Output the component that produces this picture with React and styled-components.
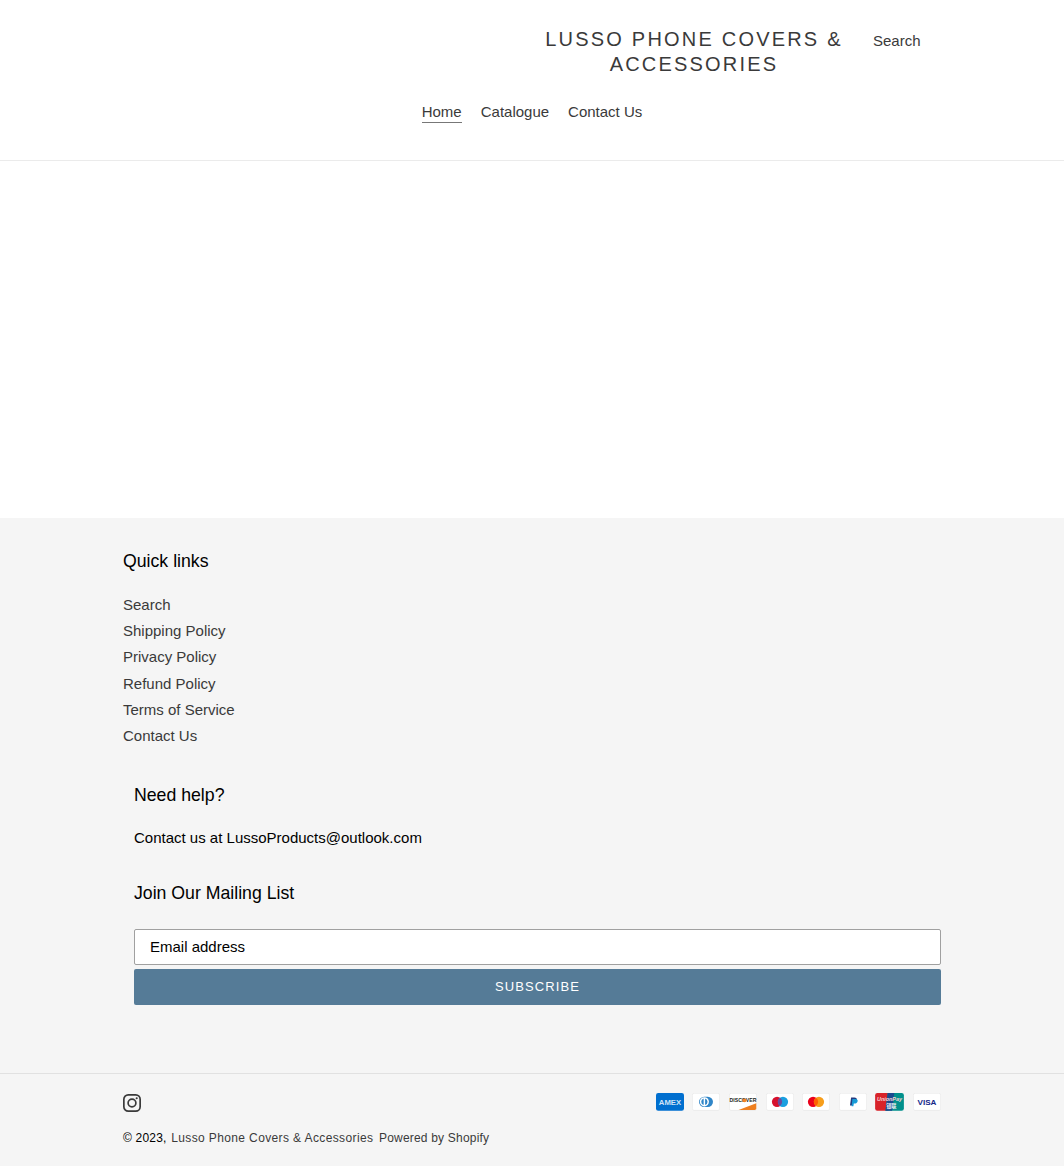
import styled, { createGlobalStyle } from "styled-components";

const GlobalStyle = createGlobalStyle`
  html, body {
    background: #fff;
    color: #3a3a3a;
    font-family: "Liberation Sans", Arial, sans-serif;
    font-size: 15px;
    margin: 0;
    padding: 0;
  }
  * { box-sizing: border-box; }
`;

const quickLinks = [
  "Search",
  "Shipping Policy",
  "Privacy Policy",
  "Refund Policy",
  "Terms of Service",
  "Contact Us",
];

function Card({ children }) {
  return (
    <svg width="28" height="17.7" viewBox="0 0 38 24" role="img">
      <rect x="0.5" y="0.5" width="37" height="23" rx="2.5" fill="#fff" stroke="#000" strokeOpacity="0.07" />
      {children}
    </svg>
  );
}

function PaymentIcons() {
  return (
    <PaymentList>
      <svg width="28" height="17.7" viewBox="0 0 38 24" role="img">
        <rect width="38" height="24" rx="3" fill="#006fcf" />
        <text x="19" y="15.8" textAnchor="middle" fontSize="10.5" fontWeight="700" fill="#cfe4f7" fontFamily="Liberation Sans">AMEX</text>
      </svg>
      <Card>
        <path d="M16.5 5h5a7 7 0 0 1 0 14h-5a7 7 0 0 1 0-14z" fill="#3086c8" />
        <circle cx="16.8" cy="12" r="6.2" fill="#fff" />
        <path d="M15.8 7.6a4.6 4.6 0 0 0 0 8.8zM17.8 7.6a4.6 4.6 0 0 1 0 8.8z" fill="#3086c8" />
      </Card>
      <Card>
        <path d="M13 23l24-9v7a2 2 0 0 1-2 2z" fill="#ee7f1f" />
        <text x="19" y="12.4" textAnchor="middle" fontSize="7" fontWeight="700" fill="#231f20" fontFamily="Liberation Sans">DISCOVER</text>
        <circle cx="21" cy="10" r="2.5" fill="#f58220" />
      </Card>
      <Card>
        <circle cx="15" cy="12" r="7" fill="#d6112e" />
        <circle cx="23" cy="12" r="7" fill="#1a9fe0" />
        <path d="M19 6.3a7 7 0 0 1 0 11.4 7 7 0 0 1 0-11.4z" fill="#6c4a9e" />
      </Card>
      <Card>
        <circle cx="15" cy="12" r="7" fill="#eb001b" />
        <circle cx="23" cy="12" r="7" fill="#f79e1b" />
        <path d="M19 6.3a7 7 0 0 1 0 11.4 7 7 0 0 1 0-11.4z" fill="#ff5f00" />
      </Card>
      <Card>
        <path d="M16.4 6h4.4c2.6 0 3.9 1.4 3.4 3.5-.5 2.4-2.3 3.6-4.6 3.6h-1.3l-.7 4h-2.7z" fill="#253b80" />
        <path d="M18.2 8h4.2c2.3 0 3.3 1.2 2.9 3.2-.5 2.2-2 3.2-4.1 3.2h-1.1l-.6 3.6h-2.4z" fill="#179bd7" />
      </Card>
      <svg width="29" height="17.7" viewBox="0 0 39 24" role="img">
        <path d="M3 0h18l-3 24H3a3 3 0 0 1-3-3V3a3 3 0 0 1 3-3z" fill="#d8232a" />
        <path d="M36 0a3 3 0 0 1 3 3v18a3 3 0 0 1-3 3H14l3-24z" fill="#00908c" />
        <path d="M17 0h9l-3 24h-9z" fill="#1a4a8f" />
        <text x="19.5" y="11" textAnchor="middle" fontSize="7.4" fontWeight="700" fontStyle="italic" fill="#f6d5d7" fontFamily="Liberation Sans">UnionPay</text>
        <text x="22" y="20" textAnchor="middle" fontSize="7" fontWeight="700" fill="#e8eef3" fontFamily="Noto Sans CJK SC">银联</text>
      </svg>
      <Card>
        <text x="19" y="16" textAnchor="middle" fontSize="11" fontWeight="700" fill="#142688" fontFamily="Liberation Sans">VISA</text>
      </Card>
    </PaymentList>
  );
}

export default function App() {
  return (
    <>
      <GlobalStyle />
      <Header>
        <TitleRow>
          <div />
          <SiteTitle href="#">Lusso Phone Covers &amp; Accessories</SiteTitle>
          <SearchLink href="#">Search</SearchLink>
        </TitleRow>
        <Nav>
          <NavLink href="#" $active>Home</NavLink>
          <NavLink href="#">Catalogue</NavLink>
          <NavLink href="#">Contact Us</NavLink>
        </Nav>
      </Header>
      <Main />
      <Footer>
        <FooterTop>
          <LinksBlock>
            <BlockTitle>Quick links</BlockTitle>
            <LinkList>
              {quickLinks.map((label) => (
                <li key={label}>
                  <FooterLink href="#">{label}</FooterLink>
                </li>
              ))}
            </LinkList>
          </LinksBlock>
          <Inset>
            <BlockTitle>Need help?</BlockTitle>
            <HelpText>Contact us at LussoProducts@outlook.com</HelpText>
            <BlockTitle>Join Our Mailing List</BlockTitle>
            <EmailInput placeholder="Email address" />
            <SubscribeButton>Subscribe</SubscribeButton>
          </Inset>
        </FooterTop>
        <FooterBottom>
          <BottomInner>
            <BottomLeft>
              <InstagramLink href="#" aria-label="Instagram">
                <svg width="18" height="18" viewBox="0 0 18 18" fill="none" stroke="#3a3a3a" strokeWidth="1.7">
                  <rect x="0.85" y="0.85" width="16.3" height="16.3" rx="4.4" />
                  <circle cx="9" cy="9" r="3.9" />
                  <circle cx="13.7" cy="4.3" r="1.05" fill="#3a3a3a" stroke="none" />
                </svg>
              </InstagramLink>
              <Copyright>
                © 2023, <BrandLink href="#">Lusso Phone Covers &amp; Accessories</BrandLink>{" "}
                <SmallLink href="#">Powered by Shopify</SmallLink>
              </Copyright>
            </BottomLeft>
            <PaymentIcons />
          </BottomInner>
        </FooterBottom>
      </Footer>
    </>
  );
}

const Header = styled.header`
  border-bottom: 1px solid #ebebeb;
  height: 161px;
  padding: 27px 123px 0;
`;

const TitleRow = styled.div`
  align-items: start;
  display: grid;
  grid-template-columns: 1fr 328px 83px;
`;

const SiteTitle = styled.a`
  color: #3a3a3a;
  font-size: 20px;
  letter-spacing: 2.2px;
  line-height: 25px;
  text-align: center;
  text-decoration: none;
  text-transform: uppercase;
`;

const SearchLink = styled.a`
  color: #3a3a3a;
  font-size: 15px;
  line-height: 28px;
  padding-left: 15px;
  text-decoration: none;
`;

const Nav = styled.nav`
  display: flex;
  gap: 19px;
  justify-content: center;
  margin-top: 25px;
`;

const NavLink = styled.a`
  border-bottom: 1px solid ${(props) => (props.$active ? "#777" : "transparent")};
  color: #3a3a3a;
  font-size: 15px;
  line-height: 20px;
  text-decoration: none;
`;

const Main = styled.main`
  height: 357px;
`;

const Footer = styled.footer`
  background: #f5f5f5;
  height: 648px;
`;

const FooterTop = styled.div`
  padding: 32px 123px 0;
`;

const LinksBlock = styled.div`
  margin-bottom: 35px;
`;

const BlockTitle = styled.h4`
  color: #000;
  font-size: 17.7px;
  font-weight: 400;
  line-height: 23px;
  margin: 0 0 19px;
`;

const LinkList = styled.ul`
  list-style: none;
  margin: 0;
  padding: 0;

  li {
    height: 26.2px;
    line-height: 26px;
  }
`;

const FooterLink = styled.a`
  color: #3a3a3a;
  font-size: 15px;
  text-decoration: none;
`;

const Inset = styled.div`
  padding-left: 11px;
`;

const HelpText = styled.p`
  color: #000;
  font-size: 15px;
  line-height: 24px;
  margin: 0 0 32px;
`;

const EmailInput = styled.input`
  background: #fff;
  border: 1px solid #a0a0a0;
  border-radius: 2px;
  color: #000;
  display: block;
  font-family: inherit;
  font-size: 15px;
  height: 36px;
  margin-top: 24px;
  padding: 0 15px 2px;
  width: 100%;

  &::placeholder {
    color: #000;
    opacity: 1;
  }
`;

const SubscribeButton = styled.button`
  background: #557b97;
  border: none;
  border-radius: 2px;
  color: #fff;
  cursor: pointer;
  display: block;
  font-family: inherit;
  font-size: 13px;
  height: 36px;
  letter-spacing: 1.1px;
  margin-top: 4px;
  padding: 0 0 2px;
  text-transform: uppercase;
  width: 100%;
`;

const FooterBottom = styled.div`
  border-top: 1px solid #e1e1e1;
  margin-top: 68px;
  padding: 20px 123px 0;
`;

const BottomInner = styled.div`
  align-items: flex-start;
  display: flex;
  justify-content: space-between;
`;

const BottomLeft = styled.div`
  display: flex;
  flex-direction: column;
`;

const InstagramLink = styled.a`
  display: block;
  height: 18px;
  margin-bottom: 17px;
  width: 18px;
`;

const Copyright = styled.small`
  color: #000;
  font-size: 12px;
  letter-spacing: 0.2px;
  line-height: 18px;
`;

const SmallLink = styled.a`
  color: #3a3a3a;
  text-decoration: none;
`;

const BrandLink = styled(SmallLink)`
  letter-spacing: 0.38px;
  margin: 0 2px 0 1px;
`;

const PaymentList = styled.div`
  display: flex;
  gap: 8.6px;
  margin-top: -1px;
`;
